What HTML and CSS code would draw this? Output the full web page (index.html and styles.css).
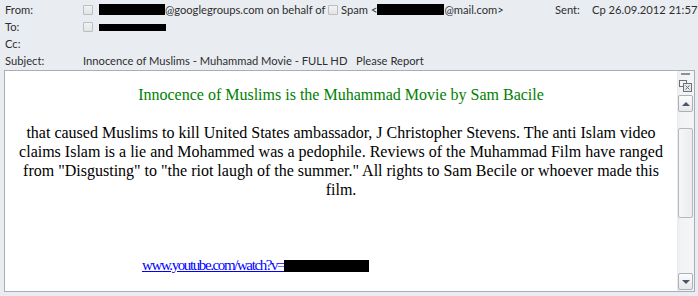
FILE: index.html
```html
<!DOCTYPE html>
<html lang="en">
<head>
    <meta charset="UTF-8">
    <meta name="viewport" content="width=device-width, initial-scale=1.0">
    <link rel="stylesheet" href="styles.css">
    <title>Message</title>
</head>
<body>
    <div class="header">
        <div class="row">
            <div class="label">From:</div>
            <div class="value">
                <span class="check"></span>
                <span class="redact redact-from"></span>@googlegroups.com on behalf of
                <span class="check"></span>Spam &lt;<span class="redact redact-mail"></span>@mail.com&gt;
            </div>
            <div class="sent">
                <span class="sent-label">Sent:</span>
                <span>Cp 26.09.2012 21:57</span>
            </div>
        </div>
        <div class="row">
            <div class="label">To:</div>
            <div class="value">
                <span class="check"></span>
                <span class="redact redact-to"></span>
            </div>
        </div>
        <div class="row">
            <div class="label">Cc:</div>
            <div class="value"></div>
        </div>
        <div class="row">
            <div class="label">Subject:</div>
            <div class="value">Innocence of Muslims - Muhammad Movie - FULL HD &nbsp; Please Report</div>
        </div>
    </div>

    <div class="message">
        <div class="content">
            <div class="title">Innocence of Muslims is the Muhammad Movie by Sam Bacile</div>
            <p class="text">
                that caused Muslims to kill United States ambassador, J Christopher Stevens. The anti Islam video<br>
                claims Islam is a lie and Mohammed was a pedophile. Reviews of the Muhammad Film have ranged<br>
                from "Disgusting" to "the riot laugh of the summer." All rights to Sam Becile or whoever made this<br>
                film.
            </p>
            <p class="link-line"><a href="#">www.youtube.com/watch?v=<span class="redact redact-link"></span></a></p>
        </div>
        <div class="scrollbar">
            <div class="dash"></div>
            <svg class="pane-icon" width="13" height="13" viewBox="0 0 13 13">
                <rect x="0.5" y="1.5" width="7" height="6" fill="#f4f4f4" stroke="#6b7079"/>
                <rect x="4.5" y="4.5" width="8" height="8" fill="#e8e8e8" stroke="#6b7079"/>
                <path d="M6.5 6.5 L10.5 10.5 M10.5 6.5 L6.5 10.5" stroke="#6b7079" stroke-width="1"/>
            </svg>
            <div class="btn btn-up"><span class="arrow-up"></span></div>
            <div class="thumb"></div>
            <div class="btn btn-down"><span class="arrow-down"></span></div>
        </div>
    </div>
</body>
</html>
```

FILE: styles.css
```css
body {
    margin: 0;
    background-color: #e9edf2;
    font-family: Lato, "Noto Sans", sans-serif;
    font-size: 11.2px;
    color: #2e2e2e;
    height: 296px;
    overflow: hidden;
}

.header {
    padding-top: 1px;
}

.row {
    display: flex;
    height: 17px;
    line-height: 17px;
}

.label {
    width: 78px;
    padding-left: 5px;
}

.value {
    flex: 1;
    white-space: nowrap;
}

.check {
    display: inline-block;
    width: 8px;
    height: 8px;
    border: 1px solid #b9bec5;
    background: linear-gradient(#f2f2f2, #e4e4e4);
    border-radius: 1px;
    vertical-align: -1px;
    margin-right: 3px;
}

.redact {
    display: inline-block;
    background-color: #000;
    vertical-align: -1px;
}

.redact-from {
    width: 66px;
    height: 11px;
}

.redact-mail {
    width: 67px;
    height: 11px;
}

.redact-to {
    width: 67px;
    height: 7px;
    vertical-align: 0;
}

.sent {
    display: flex;
    width: 143px;
    white-space: nowrap;
}

.sent-label {
    width: 37px;
    flex-shrink: 0;
}

.message {
    display: flex;
    height: 220px;
    margin: 1px 3px 0 4px;
    border: 1px solid #a7aeb7;
    background-color: #fff;
}

.content {
    flex: 1;
    font-family: "Liberation Serif", "Times New Roman", serif;
    font-size: 16px;
    color: #000;
}

.title {
    padding-top: 14px;
    text-align: center;
    font-size: 16px;
    line-height: 20px;
    color: #008000;
}

.text {
    margin: 18px 0 0 0;
    text-align: center;
    line-height: 19px;
}

.link-line {
    margin: 56px 0 0 0;
    padding-left: 137px;
    line-height: 19px;
}

.link-line a {
    color: #0000ff;
    font-size: 15px;
    letter-spacing: -1.4px;
}

.redact-link {
    width: 85px;
    height: 12px;
    vertical-align: -2px;
}

.scrollbar {
    width: 17px;
    display: flex;
    flex-direction: column;
    align-items: center;
    background: linear-gradient(to right, #e9eaeb, #f3f4f5 4px, #f3f4f5);
}

.dash {
    width: 9px;
    height: 2px;
    margin-top: 2px;
    background-color: #8c9198;
}

.pane-icon {
    display: block;
    margin-top: 4px;
}

.btn {
    width: 13px;
    height: 15px;
    border: 1px solid #aab1b9;
    border-radius: 2px;
    background: linear-gradient(#fcfcfc, #e7e8ea);
    display: flex;
    align-items: center;
    justify-content: center;
}

.btn-up {
    margin-top: 3px;
}

.btn-down {
    margin-top: auto;
    margin-bottom: 1px;
}

.arrow-up {
    width: 0;
    height: 0;
    border-left: 4px solid transparent;
    border-right: 4px solid transparent;
    border-bottom: 4px solid #49546e;
}

.arrow-down {
    width: 0;
    height: 0;
    border-left: 4px solid transparent;
    border-right: 4px solid transparent;
    border-top: 4px solid #49546e;
}

.thumb {
    width: 13px;
    height: 88px;
    margin-top: 16px;
    border: 1px solid #b3b9c0;
    border-radius: 2px;
    background: linear-gradient(to right, #f7f7f7, #ebecee);
}
```
